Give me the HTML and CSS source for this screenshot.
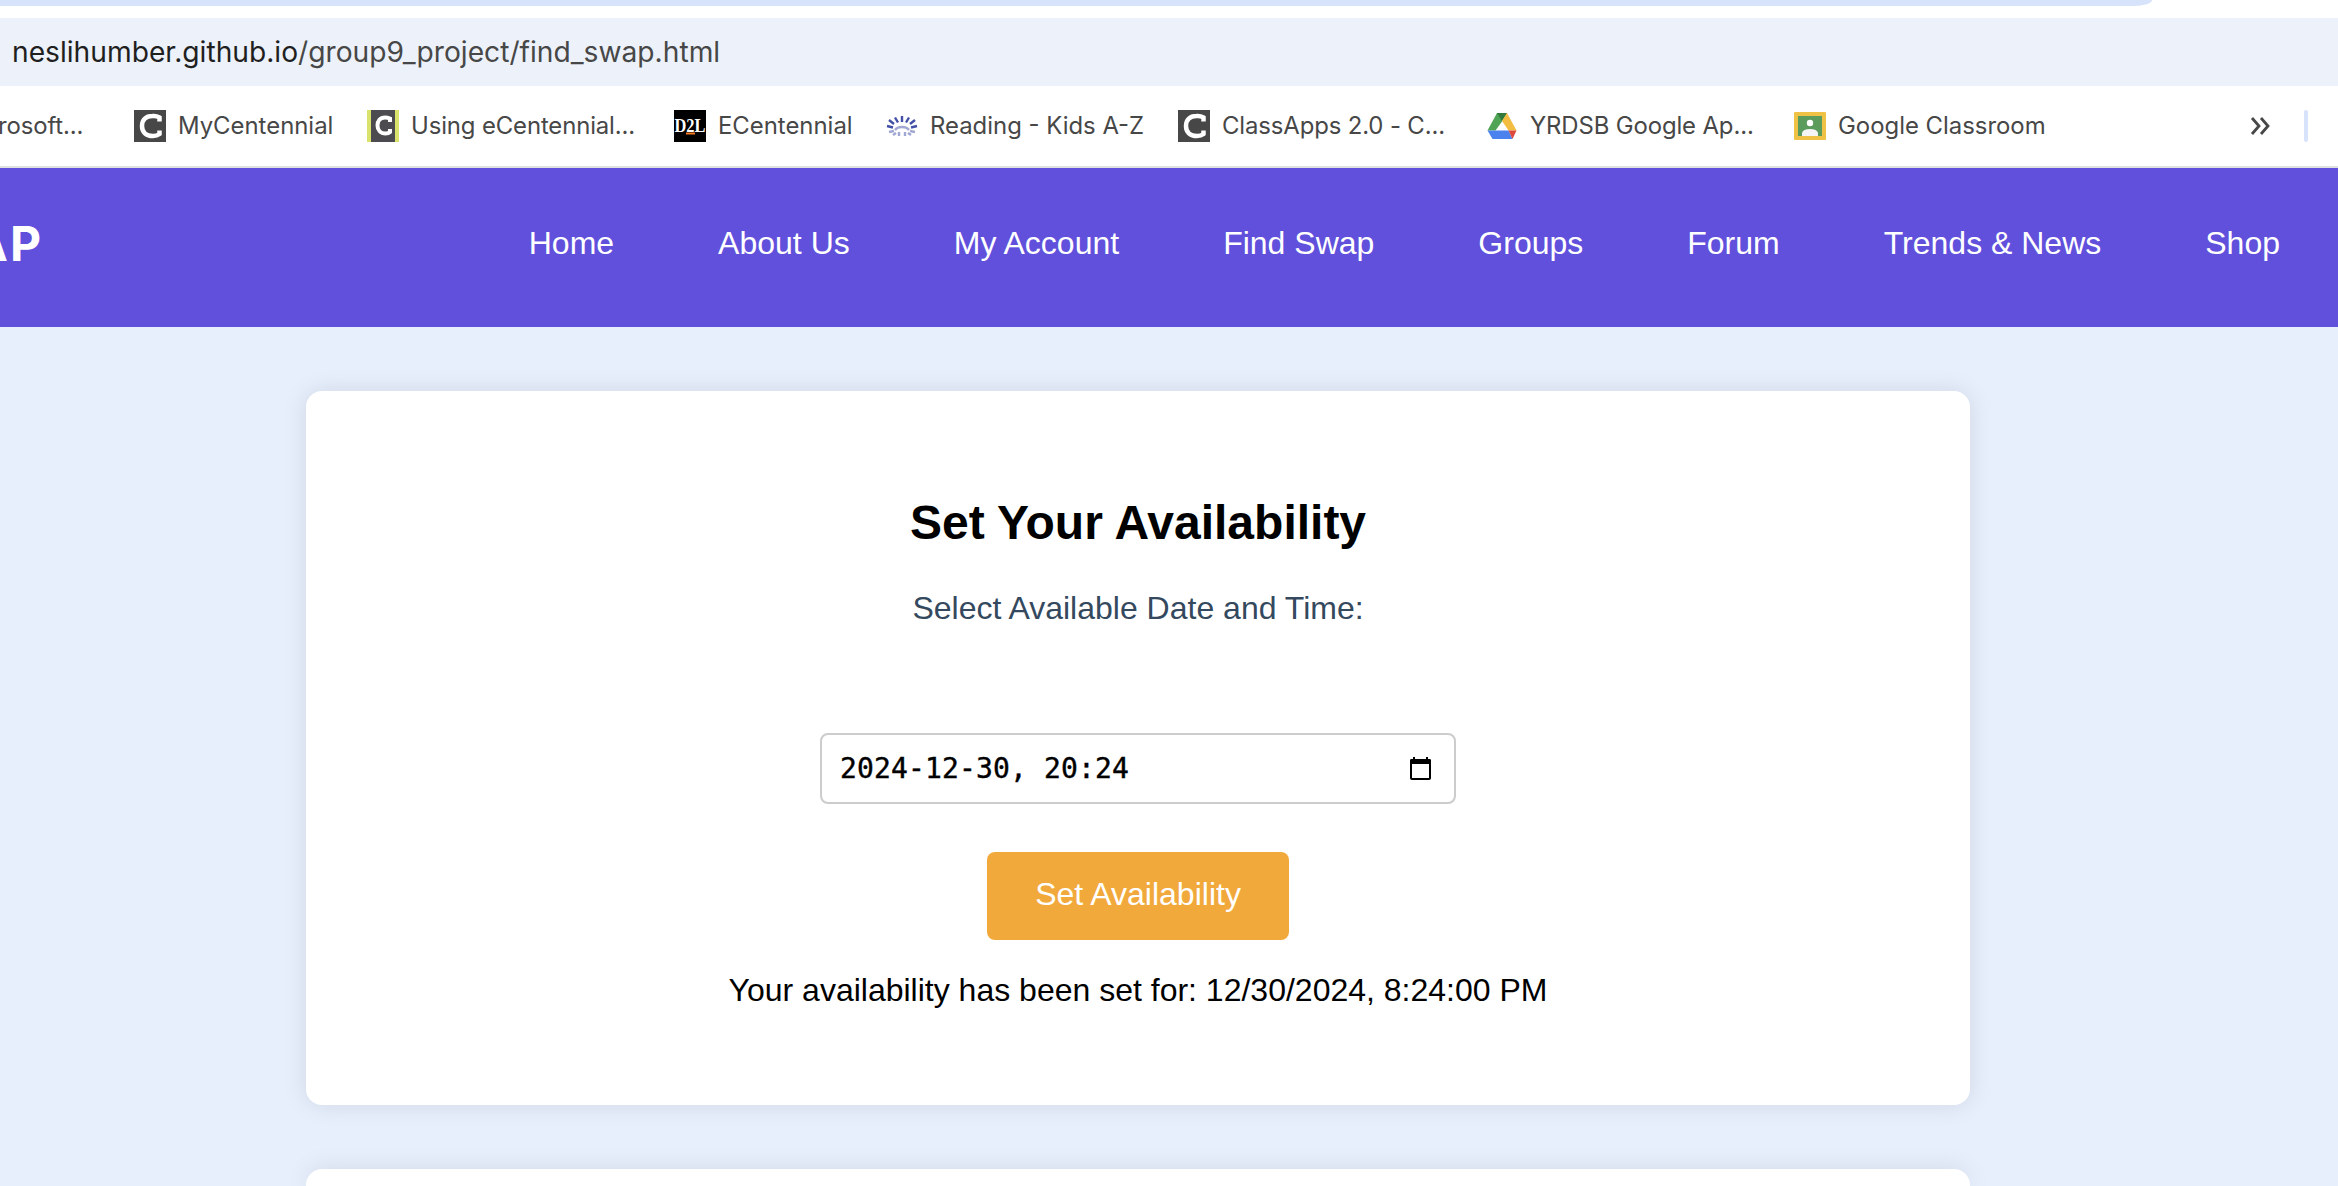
FILE: index.html
```html
<!DOCTYPE html>
<html lang="en">
<head>
<meta charset="utf-8">
<title>Find Swap</title>
<link rel="stylesheet" href="styles.css">
</head>
<body>
<div class="tabs"><div class="tab-strip"></div></div>
<div class="address"><span class="host">neslihumber.github.io</span><span class="path">/group9_project/find_swap.html</span></div>
<div class="bookmarks">
  <div class="bm bm-cut"><span class="tight">rosoft...</span></div>
  <div class="bm b2"><svg class="ico" viewBox="0 0 32 32"><rect width="32" height="32" fill="#474747"/><path d="M25.5 11.5V7.5Q22 5.5 18.5 6C11.500 6 8 10 8 16S12 26 19 26Q23 26 25.500 24V20.500" fill="none" stroke="#fff" stroke-width="4.500"/></svg><span>MyCentennial</span></div>
  <div class="bm b3"><svg class="ico" viewBox="0 0 32 32"><rect width="32" height="32" fill="#d9e36c"/><rect x="4" width="24" height="32" fill="#4b4b50"/><path d="M23 12V8.500Q20.500 7.500 18 7.500C13 7.500 10.500 11 10.500 15.500S13.500 23.500 18.500 23.500Q21.500 23.500 23 22V19" fill="none" stroke="#fff" stroke-width="4"/></svg><span class="tight">Using eCentennial...</span></div>
  <div class="bm b4"><svg class="ico" viewBox="0 0 32 32"><rect width="32" height="32" fill="#000"/><text class="d2l" x="0.500" y="22" textLength="31" lengthAdjust="spacingAndGlyphs">D2L</text><path d="M12 23.500h9" stroke="#f47b20" stroke-width="2"/></svg><span>ECentennial</span></div>
  <div class="bm b5"><svg class="ico" viewBox="0 0 32 32" fill="none" stroke="#4350a8" stroke-width="2.400"><path d="M16 6v6M9 7.500l3 5M23 7.500l-3 5M3 10l5 4M29 10l-5 4M1 16l6 1.500M31 16l-6 1.500"/><path d="M9 20q2-3 7-3t7 3M3 22l5-1M29 22l-5-1M13 22v4M19 22v4M7 25l3-2M25 25l-3-2" opacity=".5"/></svg><span>Reading - Kids A-Z</span></div>
  <div class="bm b6"><svg class="ico" viewBox="0 0 32 32"><rect width="32" height="32" fill="#474747"/><path d="M25.500 11.500V7.500Q22 5.500 18.500 6C11.500 6 8 10 8 16S12 26 19 26Q23 26 25.500 24V20.500" fill="none" stroke="#fff" stroke-width="4.500"/></svg><span class="tight">ClassApps 2.0 - C...</span></div>
  <div class="bm b7"><svg class="ico" viewBox="0 0 32 32"><path d="M11 3h10l-5 8.500-6.500 9H1.500z" fill="#4fa455"/><path d="M11 3h10l-5 8z" fill="#347a3c"/><path d="M21 3l9.500 17.500h-8L16 11z" fill="#f3bd42"/><path d="M1.500 20.500h21L26.500 29h-20z" fill="#4c82ee"/><path d="M22.500 20.500h8L26.500 29z" fill="#dc4a3d"/></svg><span class="tight">YRDSB Google Ap...</span></div>
  <div class="bm b8"><svg class="ico" viewBox="0 0 32 32"><rect y="2" width="32" height="28" rx="1" fill="#efc246"/><rect x="4" y="6" width="24" height="20" fill="#5b9b5b"/><circle cx="16" cy="13" r="3.200" fill="#fff"/><path d="M8 26v-3q1-4 8-4t8 4v3z" fill="#f5f5f5"/></svg><span>Google Classroom</span></div>
  <svg class="more" viewBox="0 0 20 18"><path d="M2 1l7 8-7 8M11 1l7 8-7 8" fill="none" stroke="#474747" stroke-width="2.800"/></svg>
  <div class="divider"></div>
</div>
<header class="site-nav">
  <div class="logo"><span>SWAP</span></div>
  <nav class="links"><a>Home</a><a>About Us</a><a>My Account</a><a>Find Swap</a><a>Groups</a><a>Forum</a><a>Trends &amp; News</a><a>Shop</a></nav>
</header>
<main class="content">
  <section class="card availability">
    <h2 class="title">Set Your Availability</h2>
    <label class="label">Select Available Date and Time:</label>
    <div class="field"><span class="value">2024-12-30, 20:24</span><svg class="calendar" viewBox="0 0 21 23"><rect x="1" y="3" width="19" height="19" rx="1" fill="none" stroke="#000" stroke-width="2"/><path d="M0 3.500Q0 2 1.500 2h18Q21 2 21 3.500V7H0zM3 0h2v3H3zM16 0h2v3h-2z"/></svg></div>
    <button class="submit">Set Availability</button>
    <p class="status">Your availability has been set for: 12/30/2024, 8:24:00 PM</p>
  </section>
  <section class="card next-card"></section>
</main>
</body>
</html>
```
FILE: styles.css
```css
* { box-sizing: border-box; }
body { margin: 0; width: 2338px; height: 1186px; overflow: hidden; display: flex; flex-direction: column; background: #e8effc; font-family: "Liberation Sans", Arial, sans-serif; }
.tabs { height: 18px; flex: none; background: #fff; }
.tab-strip { width: 2152px; height: 6px; background: #d7e2fb; border-bottom-right-radius: 18px 6px; }
.address { height: 68px; flex: none; padding-left: 12px; background: #edf2fa; font: 28.2px/68px Inter, sans-serif; color: #474747; white-space: nowrap; }
.host { color: #1f1f1f; }
.bookmarks { height: 82px; flex: none; display: flex; align-items: center; background: #fff; border-bottom: 2px solid #dfe1e0; font: 23.900px/32px Inter, sans-serif; color: #474747; }
.bm { display: flex; align-items: center; gap: 12px; flex: none; white-space: nowrap; }
.tight { letter-spacing: -0.120px; }
.bm-cut { width: 134px; }
.bm-cut .tight { margin-left: -2px; }
.b2 { width: 233px; }
.b3 { width: 307px; }
.b4 { width: 212px; }
.b5 { width: 292px; }
.b6 { width: 308px; }
.b7 { width: 308px; }
.b8 { width: 456px; }
.ico { width: 32px; height: 32px; flex: none; }
.d2l { font: bold 18px "Liberation Serif", serif; fill: #fff; }
.more { width: 20px; height: 18px; flex: none; }
.divider { width: 4px; height: 32px; margin-left: 34px; border-radius: 2px; background: #d7e2fb; }
.site-nav { height: 159px; flex: none; display: flex; justify-content: space-between; padding: 0 58px 8px 0; align-items: center; background: #6050dc; color: #fff; }
.logo { width: 43px; display: flex; justify-content: flex-end; overflow: hidden; font: 700 48px/60px Inter, sans-serif; letter-spacing: 2px; }
.links { display: flex; gap: 104px; margin-top: -1px; font-size: 32px; }
.content { width: 1728px; min-height: 0; flex: 1; overflow: hidden; margin-left: 274px; padding: 64px 32px 0; display: flex; flex-direction: column; gap: 64px; }
.card { height: 714px; flex: none; border-radius: 16px; background: #fff; box-shadow: 0 0 24px rgba(0,0,0,.1); }
.next-card { height: 17px; border-radius: 16px 16px 0 0; }
.availability { display: flex; flex-direction: column; align-items: center; padding-top: 104px; }
.title { margin: 0; font-size: 48px; line-height: 56px; }
.label { margin-top: 39px; font-size: 32px; line-height: 36px; color: #34495e; }
.field { width: 636px; height: 71px; margin-top: 107px; padding: 0 23px 0 18px; display: flex; align-items: center; justify-content: space-between; border: 2px solid #ccc; border-radius: 8px; font: 28px/34px "DejaVu Sans Mono", monospace; }
.value { letter-spacing: 0.150px; -webkit-text-stroke: 0.400px #000; }
.calendar { width: 21px; height: 23px; }
.submit { width: 302px; height: 88px; margin-top: 48px; padding: 0 0 3px; border: 0; border-radius: 8px; background: #f1a93b; color: #fff; font: 32px "Liberation Sans", Arial, sans-serif; }
.status { margin: 32px 0 0; font-size: 32px; line-height: 36px; }
```
